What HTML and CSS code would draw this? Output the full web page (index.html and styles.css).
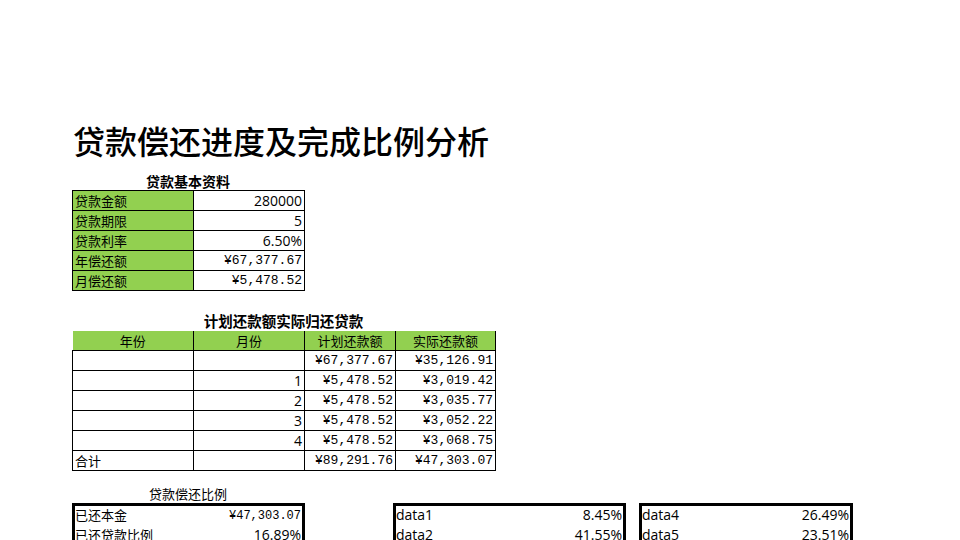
FILE: index.html
```html
<!DOCTYPE html>
<html lang="zh">
<head>
<meta charset="utf-8">
<link rel="stylesheet" href="styles.css">
</head>
<body>
<div class="page">
  <h1 class="title">贷款偿还进度及完成比例分析</h1>

  <div class="caption cap1">贷款基本资料</div>
  <table class="grid t1">
    <tr><td class="lbl">贷款金额</td><td class="num sans">280000</td></tr>
    <tr><td class="lbl">贷款期限</td><td class="num sans">5</td></tr>
    <tr><td class="lbl">贷款利率</td><td class="num sans">6.50%</td></tr>
    <tr><td class="lbl">年偿还额</td><td class="num mono">¥67,377.67</td></tr>
    <tr><td class="lbl">月偿还额</td><td class="num mono">¥5,478.52</td></tr>
  </table>

  <div class="caption cap2">计划还款额实际归还贷款</div>
  <table class="grid t2">
    <tr class="head"><td class="c1 first">年份</td><td class="c2">月份</td><td class="c3">计划还款额</td><td class="c4">实际还款额</td></tr>
    <tr><td></td><td></td><td class="num mono">¥67,377.67</td><td class="num mono">¥35,126.91</td></tr>
    <tr><td></td><td class="num sans">1</td><td class="num mono">¥5,478.52</td><td class="num mono">¥3,019.42</td></tr>
    <tr><td></td><td class="num sans">2</td><td class="num mono">¥5,478.52</td><td class="num mono">¥3,035.77</td></tr>
    <tr><td></td><td class="num sans">3</td><td class="num mono">¥5,478.52</td><td class="num mono">¥3,052.22</td></tr>
    <tr><td></td><td class="num sans">4</td><td class="num mono">¥5,478.52</td><td class="num mono">¥3,068.75</td></tr>
    <tr><td class="txt">合计</td><td></td><td class="num mono">¥89,291.76</td><td class="num mono">¥47,303.07</td></tr>
  </table>

  <div class="caption cap3">贷款偿还比例</div>
  <div class="boxes">
    <div class="box b1">
      <div class="row"><span class="txt">已还本金</span><span class="mono">¥47,303.07</span></div>
      <div class="row"><span class="txt">已还贷款比例</span><span class="sans">16.89%</span></div>
    </div>
    <div class="box b2">
      <div class="row"><span class="sans">data1</span><span class="sans">8.45%</span></div>
      <div class="row"><span class="sans">data2</span><span class="sans">41.55%</span></div>
    </div>
    <div class="box b3">
      <div class="row"><span class="sans">data4</span><span class="sans">26.49%</span></div>
      <div class="row"><span class="sans">data5</span><span class="sans">23.51%</span></div>
    </div>
  </div>
</div>
</body>
</html>
```
FILE: styles.css
```css
html, body {
  margin: 0;
  padding: 0;
  background: #ffffff;
  color: #000000;
  font-family: "Noto Sans CJK SC", "Noto Sans", sans-serif;
  overflow: hidden;
}

.page {
  width: 960px;
  height: 540px;
  padding: 118px 0 0 72px;
  box-sizing: border-box;
}

.title {
  margin: 0 0 0 1px;
  font-size: 32px;
  line-height: 44px;
  height: 54px;
  font-weight: 500;
  font-family: "Noto Sans CJK SC", serif;
}

.caption {
  text-align: center;
  font-family: "Noto Sans CJK SC", sans-serif;
}

.cap1 {
  width: 232px;
  font-size: 14px;
  font-weight: 700;
  line-height: 18px;
  height: 18px;
}

.cap2 {
  width: 423px;
  font-size: 14.5px;
  font-weight: 700;
  line-height: 20px;
  height: 20px;
  margin-top: 20px;
}

.cap3 {
  width: 232px;
  font-size: 13px;
  font-weight: 400;
  line-height: 18px;
  height: 18px;
  margin-top: 14px;
}

.grid {
  border-collapse: collapse;
  table-layout: fixed;
}

.grid td {
  border: 1px solid #000;
  height: 19px;
  padding: 0 2px;
  font-size: 13px;
  line-height: 19px;
  white-space: nowrap;
  overflow: hidden;
  box-sizing: border-box;
}

.t1 { width: 232px; }
.t1 td.lbl { width: 121px; background: #92d050; }
.t1 td.num { width: 111px; }

.t2 { width: 423px; }
.t2 .c1 { width: 121px; }
.t2 .c2 { width: 111px; }
.t2 .c3 { width: 91px; }
.t2 .c4 { width: 100px; }
.t2 .head td {
  background: #92d050;
  text-align: center;
  border-top: none;
}
.t2 .head td.first { border-left: none; }

.num { text-align: right; }
.sans { font-family: "Open Sans", "Noto Sans", sans-serif; }
.grid td.sans, .box .sans { font-size: 14px; }
.mono {
  font-family: "Liberation Mono", monospace;
  font-size: 12px;
  padding-top: 1px;
}
.txt { font-family: "Noto Sans CJK SC", sans-serif; }

.boxes {
  display: flex;
  align-items: flex-start;
}

.box {
  border: 3px solid #000;
  height: 60px;
  padding: 0 1px 0 0;
  box-sizing: border-box;
  font-size: 13px;
}
.b1 { width: 233px; }
.b2 { width: 233px; margin-left: 88px; }
.b3 { width: 214px; margin-left: 13px; }

.box .row {
  display: flex;
  justify-content: space-between;
  align-items: center;
  height: 20px;
  line-height: 20px;
  white-space: nowrap;
}
.box .row:first-child { margin-top: -1px; }
```
